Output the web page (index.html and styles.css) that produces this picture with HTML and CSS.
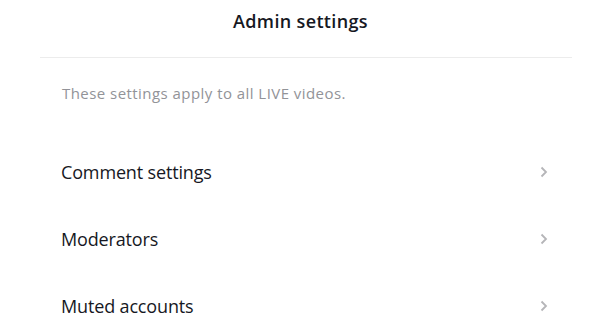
FILE: index.html
```html
<!DOCTYPE html>
<html lang="en">
<head>
    <meta charset="UTF-8">
    <meta name="viewport" content="width=device-width, initial-scale=1.0">
    <title>Admin settings</title>
    <link rel="stylesheet" href="styles.css">
</head>
<body>
    <div class="panel">
        <header class="panel-header">
            <h2>Admin settings</h2>
        </header>
        <hr class="divider">

        <p class="hint">These settings apply to all LIVE videos.</p>

        <ul class="menu">
            <li class="menu-item">
                <span>Comment settings</span>
                <svg class="chevron" viewBox="0 0 8 12" width="8" height="12"><path d="M1.5 1.5 L6 6 L1.5 10.5" /></svg>
            </li>
            <li class="menu-item">
                <span>Moderators</span>
                <svg class="chevron" viewBox="0 0 8 12" width="8" height="12"><path d="M1.5 1.5 L6 6 L1.5 10.5" /></svg>
            </li>
            <li class="menu-item">
                <span>Muted accounts</span>
                <svg class="chevron" viewBox="0 0 8 12" width="8" height="12"><path d="M1.5 1.5 L6 6 L1.5 10.5" /></svg>
            </li>
        </ul>
    </div>
</body>
</html>
```

FILE: styles.css
```css
:root {
    --text-color: #161823;
    --muted-color: #929398;
    --line-color: #ececec;
    --chevron-color: #b5b5b8;
}

body {
    font-family: "Open Sans", "Noto Sans", Arial, sans-serif;
    background-color: #ffffff;
    color: var(--text-color);
    margin: 0;
}

.panel {
    width: 597px;
}

.panel-header {
    height: 57px;
    display: flex;
    justify-content: center;
    padding-left: 4px;
}

.panel-header h2 {
    margin: 0;
    padding-top: 9px;
    font-size: 18px;
    line-height: 24px;
    font-weight: 600;
    letter-spacing: 0.35px;
}

.divider {
    margin: 0 25px 0 40px;
    border: 0;
    border-top: 1px solid var(--line-color);
}

.hint {
    margin: 0;
    padding: 25px 0 0 62px;
    font-size: 15px;
    line-height: 20px;
    letter-spacing: 0.45px;
    color: var(--muted-color);
}

.menu {
    list-style: none;
    margin: 35px 0 0;
    padding: 0 49px 0 61px;
}

.menu-item {
    display: flex;
    align-items: center;
    justify-content: space-between;
    height: 67px;
    font-size: 18px;
    letter-spacing: -0.15px;
}

.chevron {
    fill: none;
    stroke: var(--chevron-color);
    stroke-width: 1.8;
}
```
